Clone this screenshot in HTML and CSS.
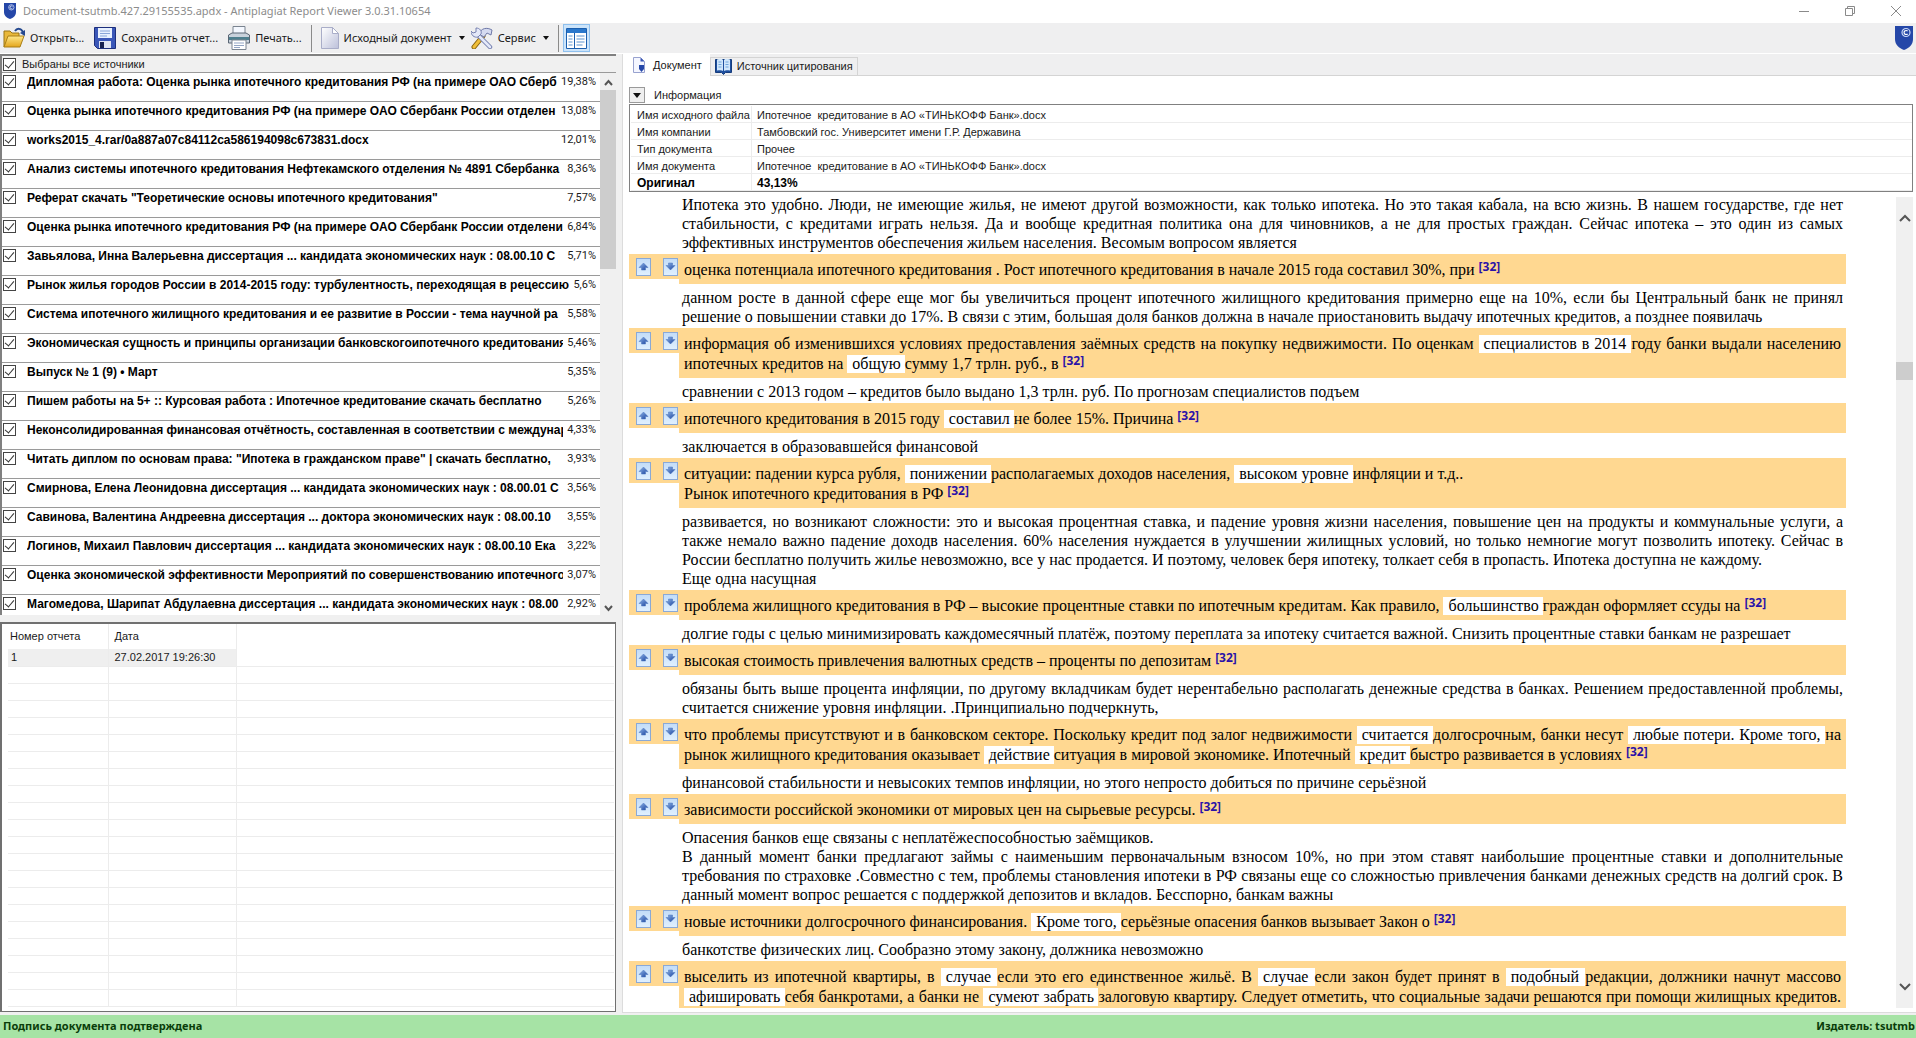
FILE: index.html
```html
<!DOCTYPE html>
<html lang="ru">
<head>
<meta charset="utf-8">
<title>Document-tsutmb.427.29155535.apdx - Antiplagiat Report Viewer 3.0.31.10654</title>
<link rel="stylesheet" href="styles.css">
</head>
<body>
<svg class="defs" aria-hidden="true">
  <defs>
    <linearGradient id="btn" x1="0" y1="0" x2="0" y2="1"><stop offset="0" stop-color="#c2dcf8"/><stop offset="1" stop-color="#e0f0ff"/></linearGradient>
    <linearGradient id="blue" x1="0" y1="0" x2="1" y2="1"><stop offset="0" stop-color="#8fb6ea"/><stop offset="1" stop-color="#17409c"/></linearGradient>
    <linearGradient id="gold" x1="0" y1="0" x2="0" y2="1"><stop offset="0" stop-color="#ffe88a"/><stop offset="1" stop-color="#e3a51c"/></linearGradient>
    <linearGradient id="sheet" x1="0" y1="0" x2="1" y2="1"><stop offset="0" stop-color="#ffffff"/><stop offset="1" stop-color="#bcc0da"/></linearGradient>
  </defs>
  <symbol id="up" viewBox="0 0 15 18">
    <rect x=".5" y=".5" width="14" height="17" fill="url(#btn)" stroke="#8aa9d6"/>
    <path d="M7.500 5 12 9.500H9.500V12h-4V9.500H3z" fill="url(#blue)" stroke="#4a74bc" stroke-width=".5"/>
  </symbol>
  <symbol id="down" viewBox="0 0 15 18">
    <rect x=".5" y=".5" width="14" height="17" fill="url(#btn)" stroke="#8aa9d6"/>
    <path d="M7.500 12 3 7.500h2.500V5h4v2.500H12z" fill="url(#blue)" stroke="#4a74bc" stroke-width=".5"/>
  </symbol>
  <symbol id="shield" viewBox="0 0 18 24">
    <path d="M0 0h18v13c0 6-4 9-9 11C4 22 0 19 0 13z" fill="#2547a8"/>
    <circle cx="11" cy="6.500" r="4" fill="none" stroke="#c8d6f6" stroke-width="1.200"/>
    <path d="M12.600 5.200a2 2 0 1 0 0 2.600" fill="none" stroke="#fff" stroke-width="1.200"/>
  </symbol>
</svg>

<div class="app">
  <header class="titlebar">
    <svg class="title-logo" viewBox="0 0 18 24"><use href="#shield"/></svg>
    <h1 class="title">Document-tsutmb.427.29155535.apdx - Antiplagiat Report Viewer 3.0.31.10654</h1>
    <button class="win" aria-label="Свернуть"><svg width="10" height="10" viewBox="0 0 10 10"><path d="M0 5.500h10"/></svg></button>
    <button class="win" aria-label="Восстановить"><svg width="10" height="10" viewBox="0 0 10 10"><path d="M.5 2.500h7v7h-7zM2.500 2.500v-2h7v7h-2"/></svg></button>
    <button class="win" aria-label="Закрыть"><svg width="10" height="10" viewBox="0 0 10 10"><path d="M0 0l10 10M10 0L0 10"/></svg></button>
  </header>

  <nav class="toolbar">
    <button class="tool">
      <svg width="22" height="22" viewBox="0 0 22 22"><path d="M1 20V4h6l2 2h7v4" fill="#e9b83a" stroke="#9a7414"/><path d="M1 20 5 9h16l-4 11z" fill="url(#gold)" stroke="#a97f16"/><path d="M12 4c2-3 6-3 8 1" fill="none" stroke="#24488f" stroke-width="2"/><path d="M22 3v6l-5-3z" fill="#24488f"/></svg>
      <span>Открыть...</span>
    </button>
    <button class="tool save">
      <svg width="22" height="22" viewBox="0 0 22 22"><path d="M.5.5h21v21h-18l-3-3z" fill="#3a57b8" stroke="#1d2f7d"/><path d="M4 1h14v10H4z" fill="#e8f1ff"/><path d="M6 4h10M6 6.500h10M6 9h7" stroke="#8aa6d8"/><path d="M5 14h12v7H5z" fill="#dfe4f2"/><path d="M6 15h4v6H6z" fill="#16204e"/></svg>
      <span>Сохранить отчет...</span>
    </button>
    <button class="tool print">
      <svg width="22" height="24" viewBox="0 0 22 24"><path d="M5 .5h12V10H5z" fill="#f4f8ff" stroke="#7a8490"/><path d="M.5 9 4 7h14l3.500 2v8h-21z" fill="#c9d2dc" stroke="#5a6674"/><path d="M1 11h20v3H1z" fill="#4e7f8e"/><path d="M4 14h14v9.500H4z" fill="#fff" stroke="#7a8490"/><path d="M6 17h10M6 19.500h10M6 21.500h6" stroke="#93a5c4"/></svg>
      <span>Печать...</span>
    </button>
    <span class="sep"></span>
    <button class="tool source">
      <svg width="18" height="22" viewBox="0 0 18 22"><path d="M.5.5h11l6 6v15H.5z" fill="url(#sheet)" stroke="#a9adc8"/><path d="M11.500.5v6h6z" fill="#fff" stroke="#a9adc8"/></svg>
      <span>Исходный документ</span><i class="caret"></i>
    </button>
    <button class="tool service">
      <svg width="22" height="22" viewBox="0 0 22 22"><path d="M12 9 3 20" stroke="#8a6410" stroke-width="5" stroke-linecap="round"/><path d="M12 9 3 20" stroke="#f0bf3a" stroke-width="3" stroke-linecap="round"/><path d="M8 7c2-6 8-7 13-4l-1 5-4-2-3 4z" fill="#d5daf0" stroke="#6f79a8"/><path d="M7 8 19 20" stroke="#7680b0" stroke-width="4.500" stroke-linecap="round"/><path d="M7 8 19 20" stroke="#e4e8f8" stroke-width="2.500" stroke-linecap="round"/><path d="M5 1v4l-3 1-2-2c0 4 3 7 7 6l3-3c1-3-1-6-5-6z" fill="#e4e8f8" stroke="#7680b0"/></svg>
      <span>Сервис</span><i class="caret"></i>
    </button>
    <span class="sep"></span>
    <button class="tool toggle" aria-label="Панель источников" aria-pressed="true">
      <svg width="21" height="21" viewBox="0 0 21 21"><path d="M.5.5h20v20H.5z" fill="#fff" stroke="#1c5fae"/><path d="M1 1h19v4H1z" fill="#2b78cc"/><path d="M8.500 5v15" stroke="#1c5fae"/><path d="M2.500 8h4M2.500 11h4M2.500 14h4M2.500 17h4M10.500 8h8M10.500 11h8M10.500 14h8M10.500 17h6" stroke="#5b93d0"/></svg>
    </button>
    <svg class="brand" viewBox="0 0 18 24"><use href="#shield"/></svg>
  </nav>

  <main class="work">
    <aside class="side">
      <section class="sources">
        <label class="all"><input type="checkbox" checked><span>Выбраны все источники</span></label>
        <div class="scroller">
          <ul class="list">
            <li><label><input type="checkbox" checked><span class="name">Дипломная работа: Оценка рынка ипотечного кредитования РФ (на примере ОАО Сберб</span><span class="pct">19,38%</span></label></li>
            <li><label><input type="checkbox" checked><span class="name">Оценка рынка ипотечного кредитования РФ (на примере ОАО Сбербанк России отделен</span><span class="pct">13,08%</span></label></li>
            <li><label><input type="checkbox" checked><span class="name">works2015_4.rar/0a887a07c84112ca586194098c673831.docx</span><span class="pct">12,01%</span></label></li>
            <li><label><input type="checkbox" checked><span class="name">Анализ системы ипотечного кредитования Нефтекамского отделения № 4891 Сбербанка</span><span class="pct">8,36%</span></label></li>
            <li><label><input type="checkbox" checked><span class="name">Реферат скачать "Теоретические основы ипотечного кредитования"</span><span class="pct">7,57%</span></label></li>
            <li><label><input type="checkbox" checked><span class="name">Оценка рынка ипотечного кредитования РФ (на примере ОАО Сбербанк России отделени</span><span class="pct">6,84%</span></label></li>
            <li><label><input type="checkbox" checked><span class="name">Завьялова, Инна Валерьевна диссертация ... кандидата экономических наук : 08.00.10 С</span><span class="pct">5,71%</span></label></li>
            <li><label><input type="checkbox" checked><span class="name">Рынок жилья городов России в 2014-2015 году: турбулентность, переходящая в рецессию</span><span class="pct">5,6%</span></label></li>
            <li><label><input type="checkbox" checked><span class="name">Система ипотечного жилищного кредитования и ее развитие в России - тема научной ра</span><span class="pct">5,58%</span></label></li>
            <li><label><input type="checkbox" checked><span class="name">Экономическая сущность и принципы организации банковскогоипотечного кредитования</span><span class="pct">5,46%</span></label></li>
            <li><label><input type="checkbox" checked><span class="name">Выпуск № 1 (9) • Март</span><span class="pct">5,35%</span></label></li>
            <li><label><input type="checkbox" checked><span class="name">Пишем работы на 5+ :: Курсовая работа : Ипотечное кредитование скачать бесплатно</span><span class="pct">5,26%</span></label></li>
            <li><label><input type="checkbox" checked><span class="name">Неконсолидированная финансовая отчётность, составленная в соответствии с междунар</span><span class="pct">4,33%</span></label></li>
            <li><label><input type="checkbox" checked><span class="name">Читать диплом по основам права: "Ипотека в гражданском праве" | скачать бесплатно,</span><span class="pct">3,93%</span></label></li>
            <li><label><input type="checkbox" checked><span class="name">Смирнова, Елена Леонидовна диссертация ... кандидата экономических наук : 08.00.01 С</span><span class="pct">3,56%</span></label></li>
            <li><label><input type="checkbox" checked><span class="name">Савинова, Валентина Андреевна диссертация ... доктора экономических наук : 08.00.10</span><span class="pct">3,55%</span></label></li>
            <li><label><input type="checkbox" checked><span class="name">Логинов, Михаил Павлович диссертация ... кандидата экономических наук : 08.00.10 Ека</span><span class="pct">3,22%</span></label></li>
            <li><label><input type="checkbox" checked><span class="name">Оценка экономической эффективности Мероприятий по совершенствованию ипотечного</span><span class="pct">3,07%</span></label></li>
            <li><label><input type="checkbox" checked><span class="name">Магомедова, Шарипат Абдулаевна диссертация ... кандидата экономических наук : 08.00</span><span class="pct">2,92%</span></label></li>
          </ul>
          <div class="bar thin">
            <svg width="9" height="14" viewBox="0 0 9 14"><path d="M1 9l3.500-4L8 9"/></svg>
            <i class="thumb"></i>
            <svg width="9" height="14" viewBox="0 0 9 14"><path d="M1 5l3.500 4L8 5"/></svg>
          </div>
        </div>
      </section>

      <section class="reports">
        <table class="grid">
          <colgroup><col class="c-num"><col class="c-date"><col></colgroup>
          <thead><tr><th>Номер отчета</th><th>Дата</th><th></th></tr></thead>
          <tbody>
            <tr class="picked"><td>1</td><td>27.02.2017 19:26:30</td><td></td></tr>
            <tr><td></td><td></td><td></td></tr><tr><td></td><td></td><td></td></tr>
            <tr><td></td><td></td><td></td></tr><tr><td></td><td></td><td></td></tr>
            <tr><td></td><td></td><td></td></tr><tr><td></td><td></td><td></td></tr>
            <tr><td></td><td></td><td></td></tr><tr><td></td><td></td><td></td></tr>
            <tr><td></td><td></td><td></td></tr><tr><td></td><td></td><td></td></tr>
            <tr><td></td><td></td><td></td></tr><tr><td></td><td></td><td></td></tr>
            <tr><td></td><td></td><td></td></tr><tr><td></td><td></td><td></td></tr>
            <tr><td></td><td></td><td></td></tr><tr><td></td><td></td><td></td></tr>
            <tr><td></td><td></td><td></td></tr><tr><td></td><td></td><td></td></tr>
            <tr><td></td><td></td><td></td></tr><tr><td></td><td></td><td></td></tr>
          </tbody>
        </table>
      </section>
    </aside>

    <section class="viewer">
      <div class="tabs">
        <button class="tab active">
          <svg width="14" height="16" viewBox="0 0 14 16"><path d="M1.500.5h7l4 4v11h-11z" fill="#f4f6ff" stroke="#98a2cf"/><path d="M8.500.5v4h4z" fill="#3b57b5"/><path d="M7 8h5v4l-2.500 3L7 12z" fill="#2547a8"/></svg>
          <span>Документ</span>
        </button>
        <button class="tab">
          <svg width="17" height="17" viewBox="0 0 17 17"><path d="M.5 1.500h16v13h-6l-2 2-2-2h-6z" fill="#1e4f9e" stroke="#163c7c"/><path d="M2 1.500c3-1 5-1 6 .5v11c-1-1-3-1-6-.5zM15 1.500c-3-1-5-1-6 .5v11c1-1 3-1 6-.5z" fill="#cfe6fb"/><path d="M3.500 4h3M3.500 6.500h3M3.500 9h3M10.500 4h3M10.500 6.500h3M10.500 9h3" stroke="#6ea5dc"/></svg>
          <span>Источник цитирования</span>
        </button>
      </div>

      <div class="info-head"><button class="fold" aria-label="Свернуть информацию"><i class="caret"></i></button><span>Информация</span></div>

      <table class="info">
        <colgroup><col class="c-label"><col></colgroup>
        <tbody>
          <tr><th scope="row">Имя исходного файла</th><td>Ипотечное&nbsp; кредитование в АО «ТИНЬКОФФ Банк».docx</td></tr>
          <tr><th scope="row">Имя компании</th><td>Тамбовский гос. Университет имени Г.Р. Державина</td></tr>
          <tr><th scope="row">Тип документа</th><td>Прочее</td></tr>
          <tr><th scope="row">Имя документа</th><td>Ипотечное&nbsp; кредитование в АО «ТИНЬКОФФ Банк».docx</td></tr>
          <tr class="total"><th scope="row">Оригинал</th><td>43,13%</td></tr>
        </tbody>
      </table>

      <div class="reader">
        <article class="doc">
          <p class="plain">Ипотека это удобно. Люди, не имеющие жилья, не имеют другой возможности, как только ипотека. Но это такая кабала, на всю жизнь. В нашем государстве, где нет стабильности, с кредитами играть нельзя. Да и вообще кредитная политика она для чиновников, а не для простых граждан. Сейчас ипотека – это один из самых эффективных инструментов обеспечения жильем населения. Весомым вопросом является</p>

          <div class="cite"><div class="nav"><button aria-label="Предыдущий"><svg><use href="#up"/></svg></button><button aria-label="Следующий"><svg><use href="#down"/></svg></button></div>
            <p>оценка потенциала ипотечного кредитования . Рост ипотечного кредитования в начале 2015 года составил 30%, при <a href="#s32">[32]</a></p></div>

          <p class="plain">данном росте в данной сфере еще мог бы увеличиться процент ипотечного жилищного кредитования примерно еще на 10%, если бы Центральный банк не принял решение о повышении ставки до 17%. В связи с этим, большая доля банков должна в начале приостановить выдачу ипотечных кредитов, а позднее появилачь</p>

          <div class="cite"><div class="nav"><button aria-label="Предыдущий"><svg><use href="#up"/></svg></button><button aria-label="Следующий"><svg><use href="#down"/></svg></button></div>
            <p>информация об изменившихся условиях предоставления заёмных средств на покупку недвижимости. По оценкам <mark>специалистов в 2014 </mark>году банки выдали населению ипотечных кредитов на <mark>общую </mark>сумму 1,7 трлн. руб., в <a href="#s32">[32]</a></p></div>

          <p class="plain">сравнении с 2013 годом – кредитов было выдано 1,3 трлн. руб. По прогнозам специалистов подъем</p>

          <div class="cite"><div class="nav"><button aria-label="Предыдущий"><svg><use href="#up"/></svg></button><button aria-label="Следующий"><svg><use href="#down"/></svg></button></div>
            <p>ипотечного кредитования в 2015 году <mark>составил </mark>не более 15%. Причина <a href="#s32">[32]</a></p></div>

          <p class="plain">заключается в образовавшейся финансовой</p>

          <div class="cite"><div class="nav"><button aria-label="Предыдущий"><svg><use href="#up"/></svg></button><button aria-label="Следующий"><svg><use href="#down"/></svg></button></div>
            <p>ситуации: падении курса рубля, <mark>понижении </mark>располагаемых доходов населения, <mark>высоком уровне </mark>инфляции и т.д..<br>Рынок ипотечного кредитования в РФ <a href="#s32">[32]</a></p></div>

          <p class="plain">развивается, но возникают сложности: это и высокая процентная ставка, и падение уровня жизни населения, повышение цен на продукты и коммунальные услуги, а также немало важно падение доходв населения. 60% населения нуждается в улучшении жилищных условий, но только немногие могут позволить ипотеку. Сейчас в России бесплатно получить жилье невозможно, все у нас продается. И поэтому, человек беря ипотеку, толкает себя в пропасть. Ипотека доступна не каждому.<br>Еще одна насущная</p>

          <div class="cite"><div class="nav"><button aria-label="Предыдущий"><svg><use href="#up"/></svg></button><button aria-label="Следующий"><svg><use href="#down"/></svg></button></div>
            <p>проблема жилищного кредитования в РФ – высокие процентные ставки по ипотечным кредитам. Как правило, <mark>большинство </mark>граждан оформляет ссуды на <a href="#s32">[32]</a></p></div>

          <p class="plain">долгие годы с целью минимизировать каждомесячный платёж, поэтому переплата за ипотеку считается важной. Снизить процентные ставки банкам не разрешает</p>

          <div class="cite"><div class="nav"><button aria-label="Предыдущий"><svg><use href="#up"/></svg></button><button aria-label="Следующий"><svg><use href="#down"/></svg></button></div>
            <p>высокая стоимость привлечения валютных средств – проценты по депозитам <a href="#s32">[32]</a></p></div>

          <p class="plain">обязаны быть выше процента инфляции, по другому вкладчикам будет нерентабельно располагать денежные средства в банках. Решением предоставленной проблемы, считается снижение уровня инфляции. .Принципиально подчеркнуть,</p>

          <div class="cite"><div class="nav"><button aria-label="Предыдущий"><svg><use href="#up"/></svg></button><button aria-label="Следующий"><svg><use href="#down"/></svg></button></div>
            <p>что проблемы присутствуют и в банковском секторе. Поскольку кредит под залог недвижимости <mark>считается </mark>долгосрочным, банки несут <mark>любые потери. Кроме того, </mark>на рынок жилищного кредитования оказывает <mark>действие </mark>ситуация в мировой экономике. Ипотечный <mark>кредит </mark>быстро развивается в условиях <a href="#s32">[32]</a></p></div>

          <p class="plain">финансовой стабильности и невысоких темпов инфляции, но этого непросто добиться по причине серьёзной</p>

          <div class="cite"><div class="nav"><button aria-label="Предыдущий"><svg><use href="#up"/></svg></button><button aria-label="Следующий"><svg><use href="#down"/></svg></button></div>
            <p>зависимости российской экономики от мировых цен на сырьевые ресурсы. <a href="#s32">[32]</a></p></div>

          <p class="plain">Опасения банков еще связаны с неплатёжеспособностью заёмщиков.<br>В данный момент банки предлагают займы с наименьшим первоначальным взносом 10%, но при этом ставят наибольшие процентные ставки и дополнительные требования по страховке .Совместно с тем, проблемы становления ипотеки в РФ связаны еще со сложностью привлечения банками денежных средств на долгий срок. В данный момент вопрос решается с поддержкой депозитов и вкладов. Бесспорно, банкам важны</p>

          <div class="cite"><div class="nav"><button aria-label="Предыдущий"><svg><use href="#up"/></svg></button><button aria-label="Следующий"><svg><use href="#down"/></svg></button></div>
            <p>новые источники долгосрочного финансирования. <mark>Кроме того, </mark>серьёзные опасения банков вызывает Закон о <a href="#s32">[32]</a></p></div>

          <p class="plain">банкотстве физических лиц. Сообразно этому закону, должника невозможно</p>

          <div class="cite"><div class="nav"><button aria-label="Предыдущий"><svg><use href="#up"/></svg></button><button aria-label="Следующий"><svg><use href="#down"/></svg></button></div>
            <p class="full">выселить из ипотечной квартиры, в <mark>случае </mark>если это его единственное жильё. В <mark>случае </mark>если закон будет принят в <mark>подобный </mark>редакции, должники начнут массово <mark>афишировать </mark>себя банкротами, а банки не <mark>сумеют забрать </mark>залоговую квартиру. Следует отметить, что социальные задачи решаются при помощи жилищных кредитов.</p></div>
        </article>
        <div class="bar wide">
          <svg width="12" height="42" viewBox="0 0 12 42"><path d="M1 24l5-5 5 5"/></svg>
          <i class="thumb"></i>
          <svg width="12" height="42" viewBox="0 0 12 42"><path d="M1 18l5 5 5-5"/></svg>
        </div>
      </div>
    </section>
  </main>

  <footer class="status"><span>Подпись документа подтверждена</span><span>Издатель: tsutmb</span></footer>
</div>
</body>
</html>
```
FILE: styles.css
```css
* { box-sizing: border-box; }
body, h1, p, ul { margin: 0; padding: 0; }
ul { list-style: none; }
body { font: 11px/13px "Liberation Sans", Arial, sans-serif; color: #1a1a1a; background: #f0f0f0; }
button { margin: 0; padding: 0; border: 0; background: none; font: inherit; color: inherit; }
svg { display: block; flex: none; }
.defs { position: absolute; width: 0; height: 0; }

.app { display: flex; flex-direction: column; height: 100vh; overflow: hidden; }

/* Title bar */
.titlebar { display: flex; align-items: center; height: 23px; padding: 0 15px 2px 4px; background: #fff; flex: none; }
.title-logo { width: 12px; height: 16px; margin-right: 7px; }
.title { flex: 1; font: 11px/16px "Noto Sans", sans-serif; color: #8c8c8c; }
.win { width: 10px; height: 10px; margin-left: 36px; }
.win svg { fill: none; stroke: #8a8a8a; }

/* Toolbar */
.toolbar { display: flex; align-items: center; height: 31px; padding: 0 3px; border-bottom: 1px solid #fff; background: #efeff0; flex: none; font: 11px/16px "Noto Sans", sans-serif; }
.tool { display: flex; align-items: center; gap: 5px; height: 28px; white-space: nowrap; }
.tool.save, .tool.print { margin-left: 10px; }
.sep { width: 1px; height: 27px; margin: 0 4px 0 9px; background: #8a8a8a; }
.tool.source { margin-left: 5px; }
.tool.service { margin-left: 6px; }
.caret { width: 0; height: 0; border: 3px solid transparent; border-top: 4px solid #111; border-bottom: 0; margin-left: 2px; }
.tool.toggle { justify-content: center; width: 27px; border: 1px solid #8fc0ee; background: #cce4fa; }
.brand { width: 18px; height: 24px; margin-left: auto; }

/* Columns */
.work { display: grid; grid-template-columns: 616px minmax(0, 1fr); column-gap: 6px; flex: 1; min-height: 0; padding-bottom: 2px; }
.side { display: flex; flex-direction: column; gap: 7px; min-height: 0; padding-bottom: 1px; }

.sources { display: flex; flex-direction: column; height: 561px; border: solid #808080; border-width: 2px 0 0 2px; overflow: hidden; flex: none; }
.all { display: flex; align-items: center; gap: 6px; height: 17px; padding-left: 1px; border-bottom: 1px solid #9a9a9a; flex: none; }
input[type="checkbox"] { appearance: none; width: 13px; height: 13px; margin: 0; border: 1px solid #444; background: #fff; flex: none; display: grid; place-items: center; }
input[type="checkbox"]:checked::before { content: ""; width: 4px; height: 8px; margin-top: -2px; border: solid #333; border-width: 0 1px 1px 0; transform: rotate(40deg); }
.scroller { display: flex; flex: 1; min-height: 0; background: #fff; }
.list { flex: 1; min-width: 0; overflow: hidden; }
.list li { height: 29px; border-bottom: 1px solid #9a9a9a; }
.list label { display: flex; padding: 2px 4px 0 1px; }
.name { flex: 1; min-width: 0; margin-left: 11px; overflow: hidden; white-space: nowrap; font-size: 12px; line-height: 14px; font-weight: bold; color: #000; }
.pct { margin-left: 4px; font: 11px/14px Roboto, sans-serif; }

.bar { display: flex; flex-direction: column; align-items: center; background: #f0f0f0; flex: none; }
.bar svg { fill: none; stroke: #555; stroke-width: 2; }
.thumb { width: 100%; background: #cdcdcd; }
.thin { width: 16px; padding-top: 3px; }
.thin .thumb { height: 179px; margin-bottom: auto; }

/* Report list */
.reports { flex: 1; min-height: 0; overflow: hidden; border: solid #707070; border-width: 2px 1px 1px 2px; padding: 0 1px 0 6px; background: #fff; }
.grid { width: 100%; table-layout: fixed; border-collapse: collapse; }
.grid th, .grid td { padding: 0 0 0 4px; text-align: left; font-weight: normal; white-space: nowrap; border-right: 1px solid #ececec; }
.grid th { height: 25px; padding-left: 2px; }
.grid th:nth-child(2) { padding-left: 6px; }
.grid td { height: 17px; border-bottom: 1px solid #ececec; padding-left: 3px; }
.grid td:nth-child(2) { padding-left: 6px; }
.grid th:last-child, .grid td:last-child { border-right: 0; }
.picked td:not(:last-child) { background: #efefef; }
.c-num { width: 100px; }
.c-date { width: 128px; }

/* Document viewer */
.viewer { display: flex; flex-direction: column; min-width: 0; min-height: 0; background: #fff; border: solid #dcdcdc; border-width: 0 0 1px 1px; }
.tabs { display: flex; align-items: flex-end; height: 22px; background: #efeff0; box-shadow: inset 0 -1px #d4d4d4; flex: none; }
.tab { display: flex; align-items: center; height: 19px; gap: 5px; padding: 0 4px; border: 1px solid #d4d4d4; }
.tab.active { height: 22px; gap: 7px; padding: 0 7px 0 8px; background: #fff; border-color: #fff; }
.info-head { display: flex; align-items: center; gap: 9px; height: 28px; padding: 10px 0 0 6px; flex: none; }
.fold { display: grid; place-items: center; width: 16px; height: 16px; border: 1px solid #9a9a9a; background: #efefef; }
.fold .caret { margin: 0; border-width: 5px 4px 0; }
.info { width: auto; margin: 0 3px 0 6px; border-collapse: separate; border-spacing: 0; border: 1px solid #808080; padding: 1px 0 0 1px; flex: none; }
.info tbody { display: block; }
.info tr { display: flex; height: 17px; border-bottom: 1px solid #ececec; }
.info th { width: 121px; padding: 3px 0 0 6px; text-align: left; font-weight: normal; white-space: nowrap; border-right: 1px solid #ececec; }
.info td { flex: 1; padding: 3px 0 0 5px; }
.info .total th, .info .total td { font-weight: bold; font-size: 12px; color: #000; }

.reader { display: flex; flex: 1; min-height: 0; margin: 0 3px 4px 6px; }
.doc { flex: 1; min-width: 0; margin-right: 50px; overflow: hidden; font: 16px/19px "Liberation Serif", "Times New Roman", serif; color: #000; text-align: justify; }
.plain { padding: 4px 3px 2px 53px; }
.plain:first-child { padding-top: 3px; }
.cite { display: flex; align-items: flex-start; }
.nav { display: flex; gap: 12px; width: 50px; height: 25px; padding: 4px 0 0 7px; background: #ffd891; flex: none; }
.nav button, .nav svg { width: 15px; height: 18px; }
.cite p { flex: 1; min-width: 0; padding: 6px 5px 4px; line-height: 20px; background: #ffd891; }
.cite .full { text-align-last: justify; }
.cite mark { padding: 0 0 1px 5px; background: #fff; color: inherit; }
.cite a { font: bold 12px/1 "Noto Sans", sans-serif; line-height: 0; vertical-align: 4px; color: #2a12a8; text-decoration: none; }
.wide { width: 17px; margin-top: 5px; }
.wide .thumb { height: 18px; margin: 123px 0 auto; }

.status { display: flex; justify-content: space-between; align-items: center; height: 23px; padding: 0 1px 1px 3px; background: #a6e3a5; font: bold 11px/16px "Noto Sans", sans-serif; color: #0a3d0a; flex: none; }
```
